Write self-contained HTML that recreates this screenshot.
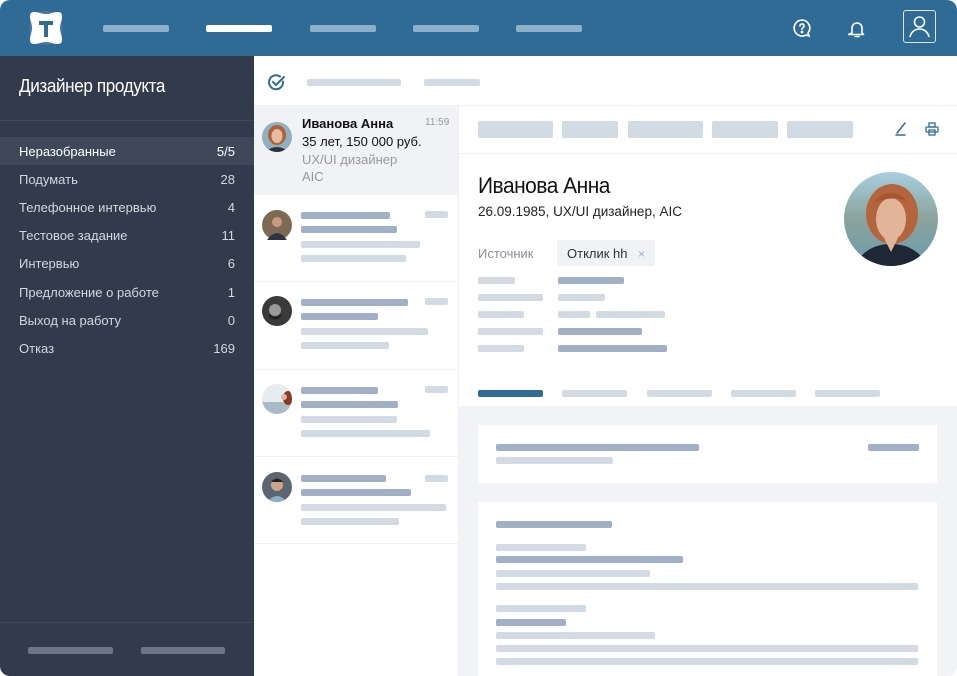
<!DOCTYPE html>
<html><head><meta charset="utf-8"><style>
*{margin:0;padding:0;box-sizing:border-box}
body{width:957px;height:676px;background:#fff;font-family:"Liberation Sans",sans-serif;overflow:hidden;position:relative}
#win{position:absolute;left:0;top:0;width:957px;height:676px;border-radius:10px;overflow:hidden;background:#fff}
.a{position:absolute}
.b{position:absolute;height:7px;border-radius:2px;background:#d2dae4}
.d{background:#a1afc7}
.t{position:absolute;white-space:nowrap}
.s{position:absolute;left:0;width:254px;height:28px;font-size:13px;color:#d3d7df}
.s span{position:absolute;left:19px;top:7px}
.s i{position:absolute;right:19px;top:7px;font-style:normal}
.hr{position:absolute;height:1px;background:#edf0f4}
</style></head><body><div id="win">
<div class="a" style="left:0;top:0;width:957px;height:56px;background:#306b96"></div>
<svg class="a" style="left:26px;top:8px" width="40" height="40" viewBox="0 0 40 40">
<circle cx="20" cy="20" r="17" fill="#5583aa" opacity=".5"/>
<path d="M9 4 C13 4 15 6 20 6 C25 6 27 4 31 4 C35 4 36 5 36 9 C36 13 34 15 34 20 C34 25 36 27 36 31 C36 35 35 36 31 36 C27 36 25 34 20 34 C15 34 13 36 9 36 C5 36 4 35 4 31 C4 27 6 25 6 20 C6 15 4 13 4 9 C4 5 5 4 9 4Z" fill="#fff"/>
<path d="M13 13h14v4h-5v12h-4V17h-5z" fill="#306b96"/>
</svg>
<div class="b" style="left:103px;top:25px;width:66px;background:#8fb0c9"></div>
<div class="b" style="left:206px;top:25px;width:66px;background:#fff"></div>
<div class="b" style="left:310px;top:25px;width:66px;background:#8fb0c9"></div>
<div class="b" style="left:413px;top:25px;width:66px;background:#8fb0c9"></div>
<div class="b" style="left:516px;top:25px;width:66px;background:#8fb0c9"></div>
<svg class="a" style="left:792px;top:18px" width="20" height="20" viewBox="0 0 20 20" fill="none" stroke="#fff" stroke-width="1.6"><path d="M10 2a8 8 0 1 0 4 15l3 1-1-3A8 8 0 0 0 10 2z"/><path d="M8 8a2 2 0 1 1 3 1.7c-.7.4-1 .8-1 1.6" stroke-linecap="round"/><circle cx="10" cy="14" r=".6" fill="#fff"/></svg>
<svg class="a" style="left:848px;top:19px" width="18" height="20" viewBox="0 0 18 20" fill="none" stroke="#fff" stroke-width="1.6"><path d="M4 14V9a5 5 0 0 1 10 0v5l1.5 1.5h-15z" stroke-linejoin="round"/><path d="M7 17.5h4" stroke-linecap="round"/></svg>
<div class="a" style="left:903px;top:10px;width:33px;height:33px;border:1.5px solid #dfe8f0;border-radius:3px"></div>
<svg class="a" style="left:903px;top:10px" width="33" height="33" viewBox="0 0 33 33" fill="none" stroke="#fff" stroke-width="1.6"><circle cx="16.5" cy="12" r="5"/><path d="M7 27c1-5 5-8 9.5-8s8.5 3 9.5 8"/></svg>
<div class="a" style="left:0;top:56px;width:254px;height:620px;background:#323b4c"></div>
<div class="t" style="left:19px;top:76px;font-size:18px;color:#fff;letter-spacing:-.4px;transform:scaleX(.95);transform-origin:left">Дизайнер продукта</div>
<div class="a" style="left:0;top:120px;width:254px;height:1px;background:#3f4859"></div>
<div class="s" style="top:137px;background:#3f4859;color:#fff"><span>Неразобранные</span><i>5/5</i></div>
<div class="s" style="top:165px"><span>Подумать</span><i>28</i></div>
<div class="s" style="top:193px"><span>Телефонное интервью</span><i>4</i></div>
<div class="s" style="top:221px"><span>Тестовое задание</span><i>11</i></div>
<div class="s" style="top:249px"><span>Интервью</span><i>6</i></div>
<div class="s" style="top:278px"><span>Предложение о работе</span><i>1</i></div>
<div class="s" style="top:306px"><span>Выход на работу</span><i>0</i></div>
<div class="s" style="top:334px"><span>Отказ</span><i>169</i></div>
<div class="a" style="left:0;top:622px;width:254px;height:1px;background:#3f4859"></div>
<div class="b" style="left:28px;top:647px;width:85px;background:#6b7585"></div>
<div class="b" style="left:141px;top:647px;width:84px;background:#6b7585"></div>
<svg class="a" style="left:267px;top:73px" width="19" height="19" viewBox="0 0 19 19" fill="none" stroke="#306b96" stroke-width="2"><path d="M16 8.5A7 7 0 1 1 13 3.5" stroke-linecap="round"/><path d="M6 9l3 3 8-8" stroke-linecap="round" stroke-linejoin="round"/></svg>
<div class="b" style="left:307px;top:79px;width:94px"></div>
<div class="b" style="left:424px;top:79px;width:56px"></div>
<div class="hr" style="left:254px;top:105px;width:703px"></div>
<div class="a" style="left:458px;top:106px;width:1px;height:570px;background:#edf0f4"></div>
<div class="a" style="left:254px;top:106px;width:204px;height:89px;background:#f1f2f6"></div>
<svg class="a" style="left:262px;top:122px" width="30" height="30" viewBox="0 0 30 30"><defs><clipPath id="c1"><circle cx="15" cy="15" r="15"/></clipPath></defs><g clip-path="url(#c1)"><rect width="30" height="30" fill="#8fb0bf"/><ellipse cx="15" cy="13" rx="9" ry="10" fill="#b0603c"/><ellipse cx="15" cy="14" rx="5.5" ry="7" fill="#e8bba0"/><path d="M3 30q12-10 24 0z" fill="#2b3242"/></g></svg>
<div class="t" style="left:302px;top:116px;font-size:13px;font-weight:bold;color:#111">Иванова Анна</div>
<div class="t" style="left:425px;top:117px;font-size:10px;color:#999">11:59</div>
<div class="t" style="left:302px;top:134px;font-size:13px;color:#111">35 лет, 150 000 руб.</div>
<div class="t" style="left:302px;top:152px;font-size:13px;color:#999">UX/UI дизайнер</div>
<div class="t" style="left:302px;top:169px;font-size:13px;color:#999">AIC</div>
<svg class="a" style="left:262px;top:210px" width="30" height="30"><circle cx="15" cy="15" r="15" fill="#7d6a55"/><circle cx="15" cy="12" r="5" fill="#c79b7e"/><path d="M5 30q10-14 20 0z" fill="#2c3444"/></svg>
<div class="b d" style="left:301px;top:212px;width:89px"></div><div class="b" style="left:425px;top:211px;width:23px"></div>
<div class="b d" style="left:301px;top:226px;width:96px"></div>
<div class="b" style="left:301px;top:241px;width:119px"></div>
<div class="b" style="left:301px;top:255px;width:105px"></div>
<div class="hr" style="left:254px;top:281px;width:204px"></div>
<svg class="a" style="left:262px;top:296px" width="30" height="30"><circle cx="15" cy="15" r="15" fill="#3a3a3a"/><circle cx="13" cy="14" r="6" fill="#9a9a9a"/><path d="M7 18q6 6 12 0v3q-6 5-12 0z" fill="#222"/></svg>
<div class="b d" style="left:301px;top:299px;width:107px"></div><div class="b" style="left:425px;top:298px;width:23px"></div>
<div class="b d" style="left:301px;top:313px;width:77px"></div>
<div class="b" style="left:301px;top:328px;width:127px"></div>
<div class="b" style="left:301px;top:342px;width:88px"></div>
<div class="hr" style="left:254px;top:369px;width:204px"></div>
<svg class="a" style="left:262px;top:384px" width="30" height="30"><defs><clipPath id="c3"><circle cx="15" cy="15" r="15"/></clipPath></defs><g clip-path="url(#c3)"><rect width="30" height="30" fill="#e6ecef"/><rect y="18" width="30" height="12" fill="#a9bcc6"/><ellipse cx="26" cy="14" rx="5" ry="7" fill="#8a3a22"/><circle cx="22" cy="13" r="3" fill="#e0b59a"/></g></svg>
<div class="b d" style="left:301px;top:387px;width:77px"></div><div class="b" style="left:425px;top:386px;width:23px"></div>
<div class="b d" style="left:301px;top:401px;width:97px"></div>
<div class="b" style="left:301px;top:416px;width:96px"></div>
<div class="b" style="left:301px;top:430px;width:129px"></div>
<div class="hr" style="left:254px;top:456px;width:204px"></div>
<svg class="a" style="left:262px;top:472px" width="30" height="30"><defs><clipPath id="c4"><circle cx="15" cy="15" r="15"/></clipPath></defs><g clip-path="url(#c4)"><rect width="30" height="30" fill="#5b6670"/><circle cx="15" cy="13" r="6" fill="#c9a58c"/><path d="M9 10q6-7 12 0" fill="#222"/><path d="M5 30q10-12 20 0z" fill="#8cb0c8"/></g></svg>
<div class="b d" style="left:301px;top:475px;width:85px"></div><div class="b" style="left:425px;top:475px;width:23px"></div>
<div class="b d" style="left:301px;top:489px;width:110px"></div>
<div class="b" style="left:301px;top:504px;width:145px"></div>
<div class="b" style="left:301px;top:518px;width:98px"></div>
<div class="hr" style="left:254px;top:543px;width:204px"></div>
<div class="a" style="left:478px;top:121px;width:75px;height:17px;border-radius:2px;background:#d2dae4"></div>
<div class="a" style="left:562px;top:121px;width:56px;height:17px;border-radius:2px;background:#d2dae4"></div>
<div class="a" style="left:628px;top:121px;width:75px;height:17px;border-radius:2px;background:#d2dae4"></div>
<div class="a" style="left:712px;top:121px;width:66px;height:17px;border-radius:2px;background:#d2dae4"></div>
<div class="a" style="left:787px;top:121px;width:66px;height:17px;border-radius:2px;background:#d2dae4"></div>
<svg class="a" style="left:894px;top:122px" width="14" height="14" fill="none" stroke="#306b96" stroke-width="1.5"><path d="M11 1L3 11M2 13h9" stroke-linecap="round"/></svg>
<svg class="a" style="left:925px;top:122px" width="14" height="14" fill="none" stroke="#306b96" stroke-width="1.3"><rect x="4" y="1" width="6" height="4"/><rect x="1" y="5" width="12" height="5" rx="1"/><rect x="4" y="8" width="6" height="5"/></svg>
<div class="hr" style="left:459px;top:153px;width:498px"></div>
<div class="t" style="left:478px;top:173px;font-size:22px;color:#111;letter-spacing:-.5px;transform:scaleX(.95);transform-origin:left">Иванова Анна</div>
<div class="t" style="left:478px;top:204px;font-size:13.5px;color:#222">26.09.1985, UX/UI дизайнер, AIC</div>
<svg class="a" style="left:844px;top:172px" width="94" height="94"><defs><clipPath id="c5"><circle cx="47" cy="47" r="47"/></clipPath><linearGradient id="g5" x1="0" y1="0" x2="0" y2="1"><stop offset="0" stop-color="#a8cfe0"/><stop offset=".5" stop-color="#8aa39c"/><stop offset="1" stop-color="#6d9cb0"/></linearGradient></defs><g clip-path="url(#c5)"><rect width="94" height="94" fill="url(#g5)"/><ellipse cx="48" cy="42" rx="26" ry="30" fill="#b5653d"/><ellipse cx="47" cy="47" rx="15" ry="21" fill="#e2b59a"/><path d="M30 30q17-20 36 2q-10-10-36-2z" fill="#a85530"/><path d="M10 94q12-22 37-22t37 22z" fill="#1f2635"/><path d="M40 66h14l-7 14z" fill="#e2b59a"/></g></svg>
<div class="t" style="left:478px;top:246px;font-size:13px;color:#8a8f98">Источник</div>
<div class="a" style="left:557px;top:240px;width:98px;height:26px;background:#f0f2f6;border-radius:2px"></div>
<div class="t" style="left:567px;top:246px;font-size:13px;color:#333">Отклик hh</div>
<div class="t" style="left:638px;top:247px;font-size:12px;color:#a1afc7">×</div>
<div class="b" style="left:478px;top:277px;width:37px"></div><div class="b d" style="left:558px;top:277px;width:66px"></div>
<div class="b" style="left:478px;top:294px;width:65px"></div><div class="b" style="left:558px;top:294px;width:47px"></div>
<div class="b" style="left:478px;top:311px;width:46px"></div><div class="b" style="left:558px;top:311px;width:32px"></div><div class="b" style="left:596px;top:311px;width:69px"></div>
<div class="b" style="left:478px;top:328px;width:65px"></div><div class="b d" style="left:558px;top:328px;width:84px"></div>
<div class="b" style="left:478px;top:345px;width:46px"></div><div class="b d" style="left:558px;top:345px;width:109px"></div>
<div class="b" style="left:478px;top:390px;width:65px;background:#306b96"></div>
<div class="b" style="left:562px;top:390px;width:65px"></div>
<div class="b" style="left:647px;top:390px;width:65px"></div>
<div class="b" style="left:731px;top:390px;width:65px"></div>
<div class="b" style="left:815px;top:390px;width:65px"></div>
<div class="a" style="left:459px;top:406px;width:498px;height:270px;background:#f1f3f7"></div>
<div class="a" style="left:478px;top:425px;width:459px;height:58px;background:#fff"></div>
<div class="b d" style="left:496px;top:444px;width:203px"></div>
<div class="b d" style="left:868px;top:444px;width:51px"></div>
<div class="b" style="left:496px;top:457px;width:117px"></div>
<div class="a" style="left:478px;top:502px;width:459px;height:174px;background:#fff"></div>
<div class="b d" style="left:496px;top:521px;width:116px"></div>
<div class="b" style="left:496px;top:544px;width:90px"></div>
<div class="b d" style="left:496px;top:556px;width:187px"></div>
<div class="b" style="left:496px;top:570px;width:154px"></div>
<div class="b" style="left:496px;top:583px;width:422px"></div>
<div class="b" style="left:496px;top:605px;width:90px"></div>
<div class="b d" style="left:496px;top:619px;width:70px"></div>
<div class="b" style="left:496px;top:632px;width:159px"></div>
<div class="b" style="left:496px;top:645px;width:422px"></div>
<div class="b" style="left:496px;top:658px;width:422px"></div>
</div></body></html>
